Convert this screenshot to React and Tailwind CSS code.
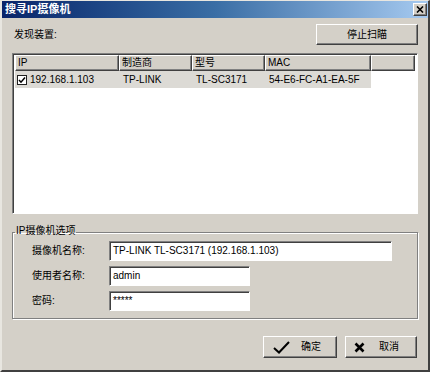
import React from "react";

const raised =
  "bg-[#d4d0c8] border border-t-white border-l-white border-r-[#404040] border-b-[#404040] shadow-[inset_-1px_-1px_0_#808080]";
const sunken =
  "bg-white border border-t-[#808080] border-l-[#808080] border-r-white border-b-white shadow-[inset_1px_1px_0_#404040]";

const columns = [
  { label: "IP", w: "w-[104px]" },
  { label: "制造商", w: "w-[73px]" },
  { label: "型号", w: "w-[73px]" },
  { label: "MAC", w: "w-[106px]" },
];

function Field({ label, value, wide }) {
  return (
    <div className="flex items-center h-[20px]">
      <span className="w-[77px] shrink-0">{label}</span>
      <div className={`${sunken} h-[20px] flex items-center pl-[3px] ${wide ? "w-[283px]" : "w-[141px]"}`}>
        {value}
      </div>
    </div>
  );
}

export default function App() {
  return (
    <div className="w-[430px] h-[372px] bg-[#d4d0c8] flex flex-col overflow-hidden border-t border-l-2 border-r-2 border-b-2 border-t-[#e8e6e0] border-l-[#e8e6e0] border-r-[#404040] border-b-[#404040] font-['Liberation_Sans','Noto_Sans_CJK_SC',sans-serif] text-[10px] text-black leading-none">
      {/* Title bar */}
      <div className="h-[17px] flex items-center justify-between pl-[3px] pr-[1px] bg-linear-to-r from-[#0a246a] via-[#3a6ea5] to-[#a6caf0]">
        <span className="text-white font-bold text-[11px]">搜寻IP摄像机</span>
        <button className={`${raised} w-[14px] h-[13px] flex items-center justify-center`}>
          <svg width="8" height="7" viewBox="0 0 8 7">
            <path d="M1 0.5 L7 6.5 M7 0.5 L1 6.5" stroke="#000" strokeWidth="1.6" />
          </svg>
        </button>
      </div>

      <div className="flex flex-col px-[10px]">
        {/* Found devices row */}
        <div className="mt-[6px] flex items-center justify-between">
          <span className="pl-[2px]">发现装置:</span>
          <button className={`${raised} w-[102px] h-[21px] flex items-center justify-center`}>停止扫瞄</button>
        </div>

        {/* Device list */}
        <div className={`${sunken} mt-[8px] h-[161px] flex flex-col p-[2px] pt-[1px]`}>
          <div className="flex h-[16px] shrink-0">
            {columns.map((c) => (
              <div key={c.label} className={`${raised} ${c.w} shrink-0 flex items-center pl-[2px]`}>
                {c.label}
              </div>
            ))}
            <div className={`${raised} flex-1`} />
          </div>
          <div className="flex h-[17px] items-center">
            <div className="flex items-center w-[356px] h-full bg-[#dcdad5]">
              <div className="w-[104px] flex items-center pl-[2px] gap-[3px]">
                <span className="w-[10px] h-[10px] border border-[#202020] bg-white flex items-center justify-center">
                  <svg width="8" height="8" viewBox="0 0 8 8">
                    <path d="M1 4 L3 6.2 L7 1.5" stroke="#000" strokeWidth="1.5" fill="none" />
                  </svg>
                </span>
                <span>192.168.1.103</span>
              </div>
              <div className="w-[73px] pl-[4px]">TP-LINK</div>
              <div className="w-[73px] pl-[4px]">TL-SC3171</div>
              <div className="w-[106px] pl-[4px]">54-E6-FC-A1-EA-5F</div>
            </div>
          </div>
        </div>

        {/* Options group */}
        <fieldset className="mt-[12px] border border-[#808080] shadow-[inset_1px_1px_0_#fff,1px_1px_0_#fff] pb-[7px] pt-[3px]">
          <legend className="ml-[2px] px-[1px] h-[12px]">IP摄像机选项</legend>
          <div className="pl-[19px] flex flex-col gap-[5px]">
            <Field label="摄像机名称:" value="TP-LINK TL-SC3171 (192.168.1.103)" wide />
            <Field label="使用者名称:" value="admin" />
            <Field label="密码:" value="*****" />
          </div>
        </fieldset>

        {/* Dialog buttons */}
        <div className="mt-[17px] flex justify-end gap-[8px] pr-[1px]">
          <button className={`${raised} w-[74px] h-[22px] flex items-center pl-[9px] gap-[11px]`}>
            <svg width="17" height="13" viewBox="0 0 17 13">
              <path d="M1 7 L6 11.5 L16 1" stroke="#000" strokeWidth="2" fill="none" />
            </svg>
            <span>确定</span>
          </button>
          <button className={`${raised} w-[72px] h-[22px] flex items-center pl-[8px] gap-[14px]`}>
            <svg width="11" height="11" viewBox="0 0 11 11">
              <path d="M1.5 1.5 L9.5 9.5 M9.5 1.5 L1.5 9.5" stroke="#000" strokeWidth="2.6" />
            </svg>
            <span>取消</span>
          </button>
        </div>
      </div>
    </div>
  );
}
